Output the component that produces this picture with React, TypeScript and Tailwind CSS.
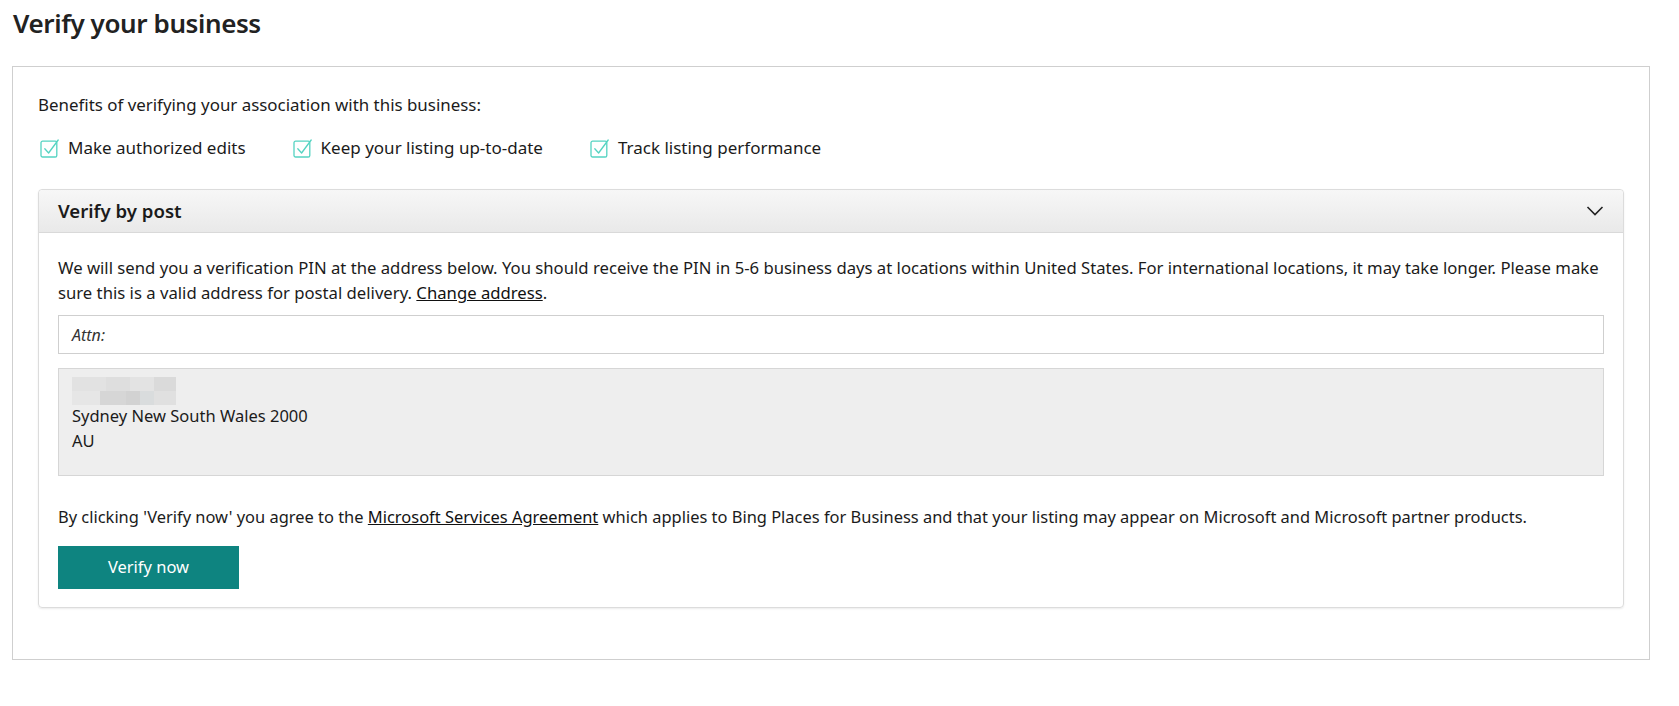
import React from "react";

const Check = () => (
  <svg width="20" height="20" viewBox="0 0 20 20" fill="none" className="shrink-0">
    <rect x="1" y="3.2" width="15.8" height="15.8" rx="1.6" stroke="#55d3c2" strokeWidth="1.3" />
    <path d="M4.8 10.8 L8.6 15 L18.2 2" stroke="#55d3c2" strokeWidth="1.3" strokeLinecap="round" strokeLinejoin="round" />
  </svg>
);

const Benefit = ({ text }: { text: string }) => (
  <div className="flex items-center gap-[8px]">
    <Check />
    <span>{text}</span>
  </div>
);

export default function App() {
  return (
    <div
      className="min-h-[706px] bg-white text-[#1b1b1b] text-[16px]"
      style={{ fontFamily: '"Noto Sans", "Open Sans", Arial, sans-serif' }}
    >
      <div className="pl-[12px] pr-[29px] pt-[5px]">
        <h1 className="pl-px text-[26px] font-semibold leading-[36px] tracking-[-0.4px] text-[#222]">Verify your business</h1>
        <div className="mt-[25px] border border-[#cfcfcf] pl-[25px] pr-[25px] pt-[27px] pb-[51px]">
          <p className="text-[16.9px] leading-[22px]">Benefits of verifying your association with this business:</p>
          <div className="mt-[21px] flex items-center gap-[47px] pl-[2px] text-[17px] leading-[22px]">
            <Benefit text="Make authorized edits" />
            <Benefit text="Keep your listing up-to-date" />
            <Benefit text="Track listing performance" />
          </div>
          <div className="mt-[30px] rounded-[4px] border border-[#dcdcdc] shadow-[0_1px_2px_rgba(0,0,0,0.08)]">
            <div className="flex h-[43px] items-center justify-between rounded-t-[4px] border-b border-[#d9d9d9] bg-gradient-to-b from-[#f7f7f7] to-[#e9e9e9] pl-[19px] pr-[19px]">
              <span className="text-[18.6px] font-semibold text-[#1b1b1b]">Verify by post</span>
              <svg width="18" height="12" viewBox="0 0 18 12" fill="none">
                <path d="M1.5 2 L9 9.5 L16.5 2" stroke="#222" strokeWidth="1.6" />
              </svg>
            </div>
            <div className="px-[19px] pt-[22px] pb-[18px]">
              <p className="text-[16.7px] leading-[25px]">
                We will send you a verification PIN at the address below. You should receive the PIN in 5-6 business days at locations within United States. For international locations, it may take longer. Please make
                <br />
                sure this is a valid address for postal delivery.{" "}
                <a className="text-[#111] underline" href="#">Change address</a>.
              </p>
              <div className="mt-[10px] flex h-[39px] items-center border border-[#cfcfcf] px-[13px] italic text-[#333]">
                Attn:
              </div>
              <div className="mt-[14px] border border-[#d6d6d6] bg-[#eeeeee] pl-[13px] pt-[9px] pb-[22px] text-[16.5px] leading-[25px]">
                <div className="flex h-[25px] flex-col justify-center">
                  <div className="flex flex-col">
                    <div className="flex">
                      <div className="h-[14px] w-[34px] bg-[#e2e2e2]" />
                      <div className="h-[14px] w-[24px] bg-[#dedede]" />
                      <div className="h-[14px] w-[24px] bg-[#e3e3e3]" />
                      <div className="h-[14px] w-[22px] bg-[#dadada]" />
                    </div>
                    <div className="flex">
                      <div className="h-[14px] w-[28px] bg-[#e6e6e6]" />
                      <div className="h-[14px] w-[26px] bg-[#d6d6d6]" />
                      <div className="h-[14px] w-[14px] bg-[#d2d2d2]" />
                      <div className="h-[14px] w-[14px] bg-[#d9dcdd]" />
                      <div className="h-[14px] w-[22px] bg-[#e0e0e0]" />
                    </div>
                  </div>
                </div>
                <div>Sydney New South Wales 2000</div>
                <div>AU</div>
              </div>
              <p className="mt-[28px] text-[16.45px] leading-[25px]">
                By clicking 'Verify now' you agree to the{" "}
                <a className="text-[#111] underline" href="#">Microsoft Services Agreement</a>{" "}
                which applies to Bing Places for Business and that your listing may appear on Microsoft and Microsoft partner products.
              </p>
              <button className="mt-[17px] h-[43px] w-[181px] bg-[#0e8480] text-[16.5px] text-white">Verify now</button>
            </div>
          </div>
        </div>
      </div>
    </div>
  );
}
